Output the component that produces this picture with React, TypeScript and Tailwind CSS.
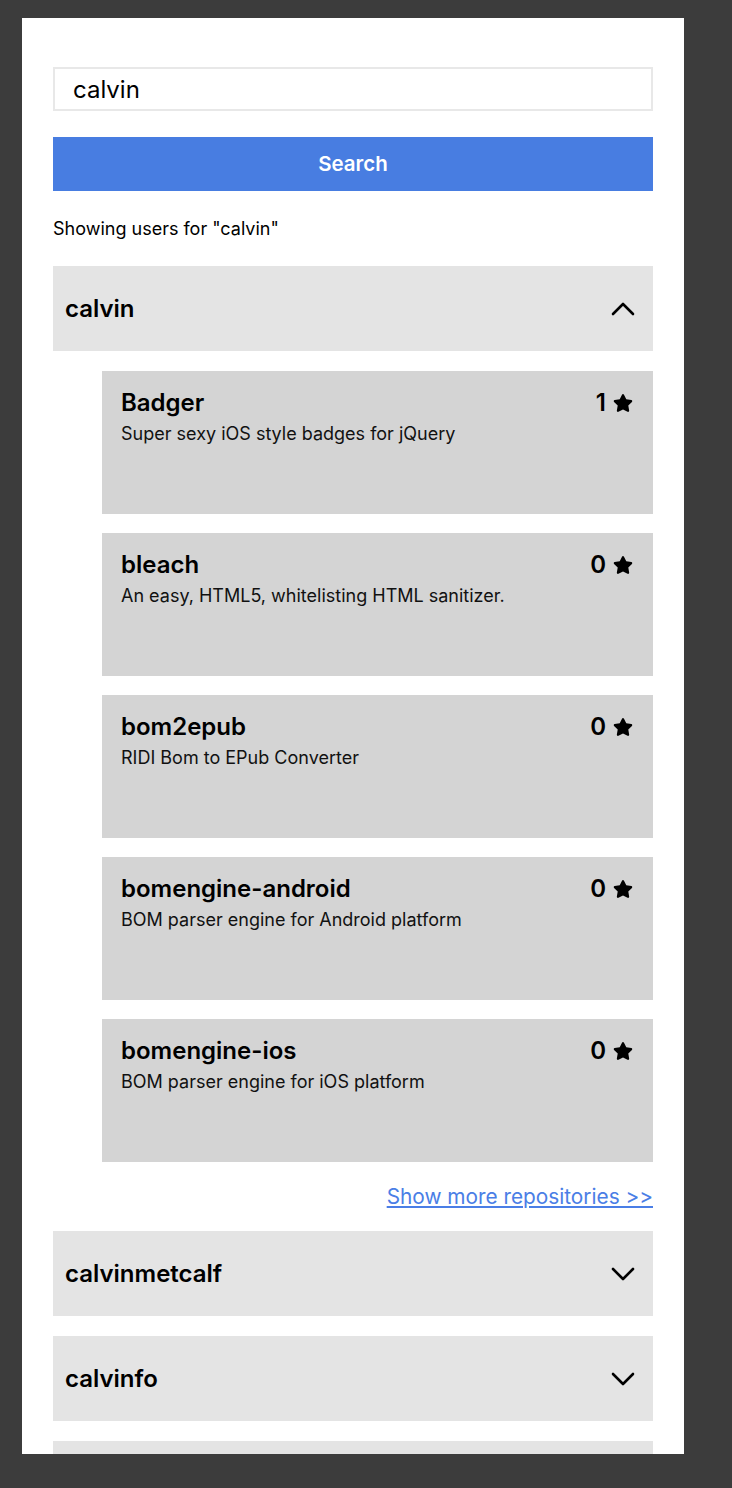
import { FaStar } from "react-icons/fa";

type Repo = { name: string; description: string; stars: number };

const repos: Repo[] = [
  { name: "Badger", description: "Super sexy iOS style badges for jQuery", stars: 1 },
  { name: "bleach", description: "An easy, HTML5, whitelisting HTML sanitizer.", stars: 0 },
  { name: "bom2epub", description: "RIDI Bom to EPub Converter", stars: 0 },
  { name: "bomengine-android", description: "BOM parser engine for Android platform", stars: 0 },
  { name: "bomengine-ios", description: "BOM parser engine for iOS platform", stars: 0 },
];

function Chevron({ up }: { up?: boolean }) {
  return (
    <svg width="24" height="14" viewBox="0 0 24 14" fill="none">
      <polyline
        points={up ? "2,12 12,2 22,12" : "2,2 12,12 22,2"}
        stroke="#000"
        strokeWidth="2.6"
        strokeLinecap="round"
        strokeLinejoin="round"
      />
    </svg>
  );
}

function UserHeader({ name, open }: { name?: string; open?: boolean }) {
  return (
    <div className="flex h-[85px] shrink-0 items-center justify-between bg-[#e4e4e4] pl-3 pr-[18px]">
      <span className="text-[24px] font-semibold text-black">{name}</span>
      <Chevron up={open} />
    </div>
  );
}

function RepoCard({ repo }: { repo: Repo }) {
  return (
    <div className="h-[143px] bg-[#d4d4d4] pl-[19px] pr-5 pt-[18px]">
      <div className="flex items-center justify-between">
        <span className="text-[24px] leading-7 font-semibold text-black">{repo.name}</span>
        <span className="flex items-center gap-[7px] text-[24px] leading-7 font-semibold text-black">
          {repo.stars}
          <FaStar className="h-5 w-5" />
        </span>
      </div>
      <p className="mt-1 text-[18px] leading-[26px] text-[#111]">{repo.description}</p>
    </div>
  );
}

export default function App() {
  return (
    <div className="min-h-[1488px] w-full bg-[#3c3c3c] pt-[18px] font-['Inter',sans-serif]">
      <div className="ml-[22px] h-[1436px] w-[662px] overflow-hidden bg-white px-[31px] pt-[49px]">
        <input
          readOnly
          value="calvin"
          className="h-[44px] w-full border-2 border-[#e8e8e8] px-[18px] text-[24px] text-black outline-none"
        />
        <button className="mt-[26px] h-[54px] w-full bg-[#487de1] text-[20.5px] font-semibold text-white">
          Search
        </button>
        <p className="mt-[25px] text-[18px] leading-[26px] text-black">Showing users for "calvin"</p>

        <div className="mt-6 flex flex-col">
          <UserHeader name="calvin" open />
          <div className="mt-5 ml-[49px] flex flex-col gap-[19px]">
            {repos.map((r) => (
              <RepoCard key={r.name} repo={r} />
            ))}
          </div>
          <div className="mt-[21px] flex justify-end">
            <a href="#" className="text-[20.8px] leading-7 text-[#4a7ee6] underline">
              Show more repositories &gt;&gt;
            </a>
          </div>
          <div className="mt-5 flex flex-col gap-5">
            <UserHeader name="calvinmetcalf" />
            <UserHeader name="calvinfo" />
            <UserHeader />
          </div>
        </div>
      </div>
    </div>
  );
}
